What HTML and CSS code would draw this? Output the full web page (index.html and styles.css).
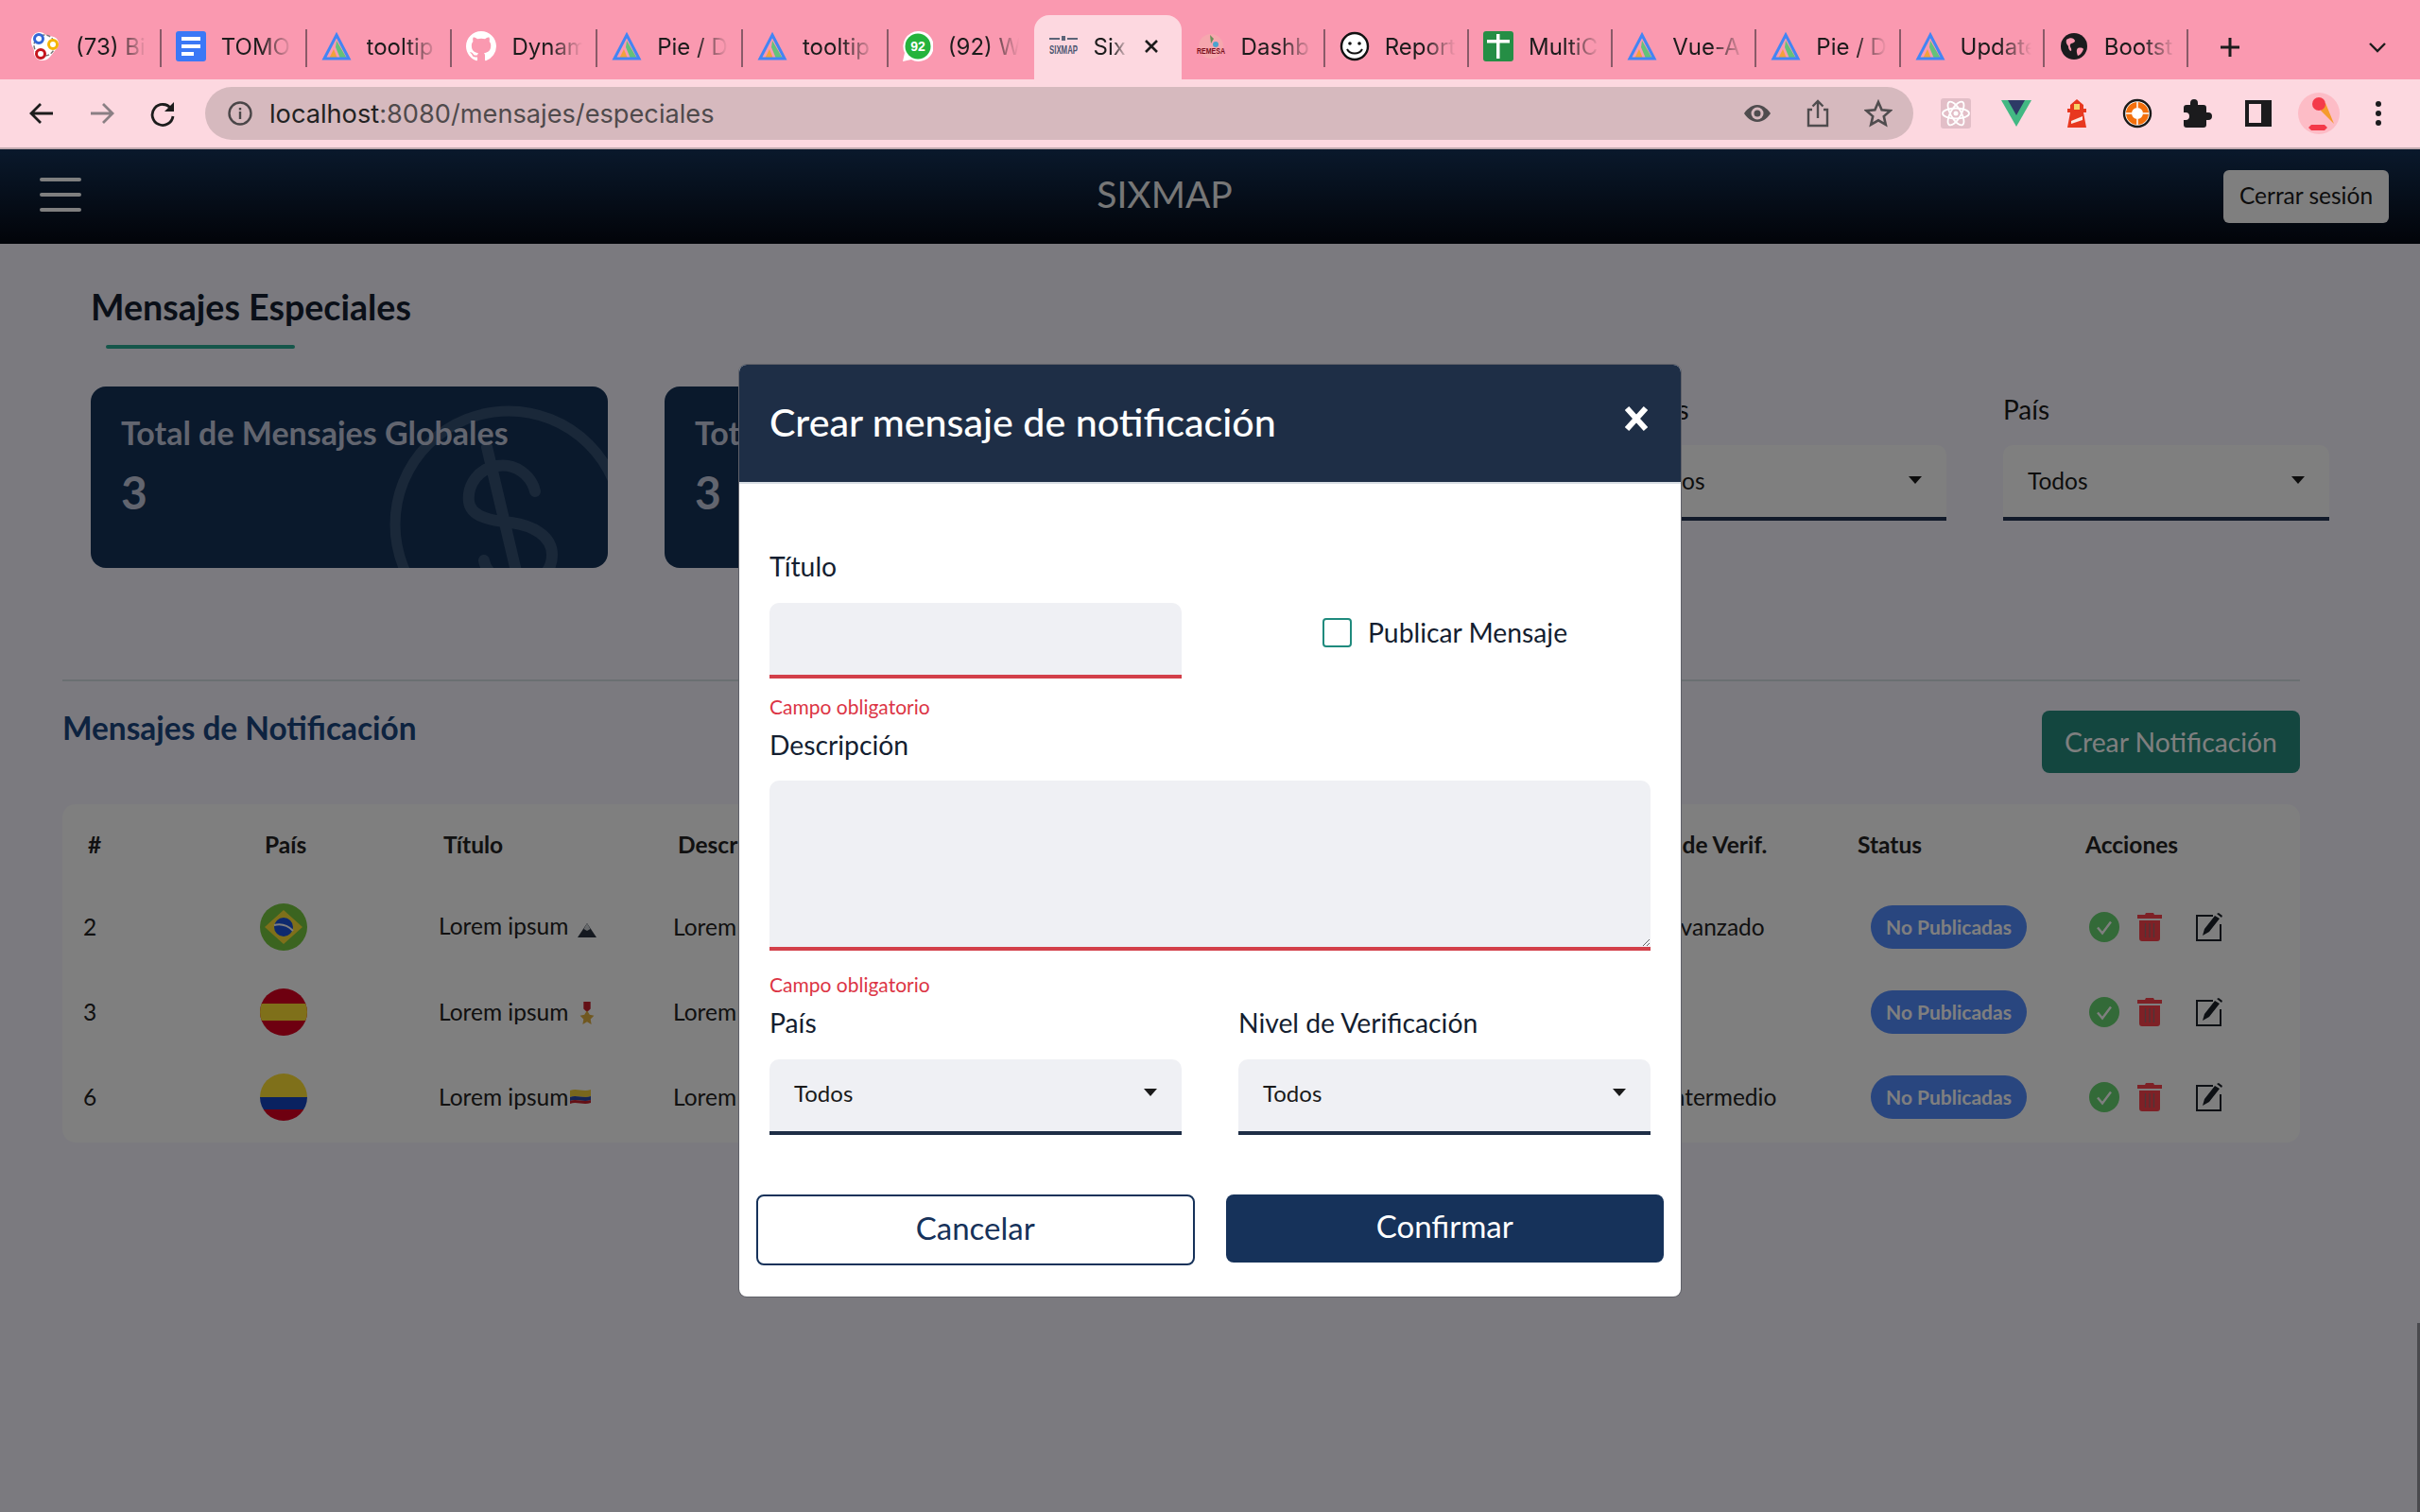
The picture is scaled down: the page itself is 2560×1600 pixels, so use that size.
FILE: index.html
```html
<!DOCTYPE html>
<html lang="es">
  <head>
    <meta charset="UTF-8">
    <meta name="viewport" content="width=device-width">
    <title>SIXMAP</title>
    <link rel="stylesheet" href="styles.css">
  </head>
  <body>
    <svg class="sprites" aria-hidden="true">
      <symbol id="apex" viewBox="0 0 32 32">
        <path d="M16 10l11 19h-7l-5-12z" fill="#63c27a"/>
        <path d="M13 19l4 10H8z" fill="#f2a23c"/>
        <path d="M16 4 29 29H3Z" fill="none" stroke="#4285f4" stroke-width="3"/>
      </symbol>
      <symbol id="check" viewBox="0 0 32 32">
        <circle cx="16" cy="16" r="16" fill="#66d470"/>
        <path d="M9 16.5l5 6 9-12" fill="none" stroke="#fff" stroke-width="2.4"/>
      </symbol>
      <symbol id="trash" viewBox="0 0 26 30">
        <path d="M9 0h8l1 2h8v4H0V2h8zM2 8h22v19a3 3 0 0 1-3 3H5a3 3 0 0 1-3-3z" fill="#fc424c"/>
        <path d="M8.500 11v15M13 11v15M17.500 11v15" stroke="#9c6a6e" stroke-width="1.300"/>
      </symbol>
      <symbol id="edit" viewBox="0 0 30 30">
        <path d="M19 3H2v26h25V12" fill="none" stroke="#1a2028" stroke-width="2"/>
        <path d="M8 24l2-7L21 3l5 3-11 14zM23 1l2-1 4 3-1 2z" fill="#1a2028"/>
      </symbol>
      <symbol id="caret" viewBox="0 0 14 8">
        <path d="M0 0h14L7 8z" fill="#1a1a1a"/>
      </symbol>
    </svg>

    <!-- Browser chrome -->
    <header class="chrome">
      <div class="tabstrip">
        <div class="tab">
          <svg class="favicon" viewBox="0 0 32 32"><path d="M10 1c4 0 6 3 9 4 5 0 11 2 11 8 0 4-3 6-5 9-3 4-6 9-12 9-6 0-10-5-9-10 0-3-3-5-3-10 0-6 4-10 9-10z" fill="#fff"/><circle cx="15" cy="15" r="11" fill="none" stroke="#777" stroke-width="1.500" stroke-dasharray="4 2"/><circle cx="9" cy="8" r="4.500" fill="#fff" stroke="#3367d6" stroke-width="3"/><circle cx="24" cy="14" r="4.500" fill="#fff" stroke="#f4b400" stroke-width="3"/><circle cx="11" cy="24" r="4.500" fill="#fff" stroke="#c5161d" stroke-width="3"/></svg>
          <span class="tab-title">(73) Bi</span>
        </div>
        <div class="tab">
          <svg class="favicon" viewBox="0 0 32 32"><rect width="32" height="32" rx="3" fill="#3b78f6"/><path d="M6 6h20v4H6zM6 14h20v4H6zM6 22h13v4H6z" fill="#fff"/></svg>
          <span class="tab-title">TOMO</span>
        </div>
        <div class="tab">
          <svg class="favicon"><use href="#apex"/></svg>
          <span class="tab-title">tooltip</span>
        </div>
        <div class="tab">
          <svg class="favicon" viewBox="0 0 16 16"><path fill="#fff" d="M8 0C3.580 0 0 3.580 0 8c0 3.540 2.290 6.530 5.470 7.590.4.070.55-.17.550-.38 0-.19-.01-.82-.01-1.490-2.010.37-2.530-.49-2.690-.94-.09-.23-.48-.94-.82-1.130-.28-.15-.68-.52-.01-.53.630-.01 1.080.58 1.230.82.720 1.210 1.870.87 2.330.66.070-.52.280-.87.510-1.070-1.780-.2-3.640-.89-3.640-3.950 0-.87.310-1.590.820-2.150-.08-.2-.36-1.020.08-2.120 0 0 .67-.21 2.200.820.640-.18 1.320-.27 2-.27s1.360.09 2 .27c1.530-1.040 2.200-.82 2.200-.82.440 1.100.16 1.920.08 2.120.51.560.820 1.270.820 2.150 0 3.070-1.870 3.750-3.650 3.950.29.250.54.730.54 1.480 0 1.070-.01 1.930-.01 2.200 0 .210.150.460.550.380A8.010 8.010 0 0 0 16 8c0-4.420-3.580-8-8-8z"/></svg>
          <span class="tab-title">Dynam</span>
        </div>
        <div class="tab">
          <svg class="favicon"><use href="#apex"/></svg>
          <span class="tab-title">Pie / D</span>
        </div>
        <div class="tab">
          <svg class="favicon"><use href="#apex"/></svg>
          <span class="tab-title">tooltip</span>
        </div>
        <div class="tab tab-before-active">
          <svg class="favicon" viewBox="0 0 32 32"><path d="M16 0a16 16 0 1 1-7 30l-9 2 2-9A16 16 0 0 1 16 0z" fill="#fff"/><circle cx="16" cy="16" r="13.500" fill="#25b33c"/><text class="wa-count" x="16" y="21">92</text></svg>
          <span class="tab-title">(92) W</span>
        </div>
        <div class="tab tab-active">
          <svg class="favicon" viewBox="0 0 32 32"><path d="M1 8h11M20 8h11" stroke="#5c6478" stroke-width="2"/><rect x="14" y="5" width="4" height="5" fill="#5c6478"/><text class="mini-logo" x="16" y="24" textLength="30" lengthAdjust="spacingAndGlyphs">SIXMAP</text></svg>
          <span class="tab-title tab-title-short">Six</span>
          <svg class="tab-close" viewBox="0 0 16 16"><path d="M2 2l12 12M14 2 2 14" stroke="#1c1c1c" stroke-width="2.600"/></svg>
        </div>
        <div class="tab">
          <svg class="favicon" viewBox="0 0 32 32"><circle cx="16" cy="16" r="13" fill="#f6a7ae"/><path d="M15 4l4 4-3 5z" fill="#6b8f5a"/><circle cx="21" cy="14" r="3" fill="#4aa3cf"/><text class="mini-logo mini-logo-red" x="16" y="24" textLength="30" lengthAdjust="spacingAndGlyphs">REMESA</text></svg>
          <span class="tab-title">Dashb</span>
        </div>
        <div class="tab">
          <svg class="favicon" viewBox="0 0 32 32"><circle cx="16" cy="16" r="14" fill="#fff" stroke="#111" stroke-width="2.400"/><circle cx="11" cy="13" r="1.800" fill="#111"/><circle cx="21" cy="13" r="1.800" fill="#111"/><path d="M8 19c3 6 13 6 16 0" fill="none" stroke="#111" stroke-width="2"/></svg>
          <span class="tab-title">Report</span>
        </div>
        <div class="tab">
          <svg class="favicon" viewBox="0 0 32 32"><rect width="32" height="32" rx="3" fill="#258e45"/><path d="M4 9h24v3.500H4zM14 3h3.500v26H14z" fill="#fff"/></svg>
          <span class="tab-title">MultiC</span>
        </div>
        <div class="tab">
          <svg class="favicon"><use href="#apex"/></svg>
          <span class="tab-title">Vue-A</span>
        </div>
        <div class="tab">
          <svg class="favicon"><use href="#apex"/></svg>
          <span class="tab-title">Pie / D</span>
        </div>
        <div class="tab">
          <svg class="favicon"><use href="#apex"/></svg>
          <span class="tab-title">Update</span>
        </div>
        <div class="tab">
          <svg class="favicon" viewBox="0 0 32 32"><circle cx="16" cy="16" r="14" fill="#1b1b1d"/><path d="M8 9c4-3 8-2 9 1 0 3-4 2-5 4-1 3 2 4 1 7-2 0-3-3-3-5-1-2-3-3-2-7zM20 18c3-1 6 0 6 1-1 3-3 6-6 7-1-3-2-6 0-8z" fill="#fa99b0"/></svg>
          <span class="tab-title">Bootst</span>
        </div>
        <svg class="new-tab" viewBox="0 0 24 24"><path d="M12 2v20M2 12h20" stroke="#1c1c1c" stroke-width="3"/></svg>
        <svg class="tab-menu" viewBox="0 0 20 12"><path d="M2 2l8 8 8-8" fill="none" stroke="#1c1c1c" stroke-width="2.400"/></svg>
      </div>

      <div class="toolbar">
        <svg class="nav-icon" viewBox="0 0 28 28"><path d="M26 14H4M13 4 3 14l10 10" fill="none" stroke="#1c1c1c" stroke-width="2.800"/></svg>
        <svg class="nav-icon" viewBox="0 0 28 28"><path d="M2 14h22M15 4l10 10-10 10" fill="none" stroke="#8a7f84" stroke-width="2.800"/></svg>
        <svg class="nav-icon" viewBox="0 0 28 28"><path d="M23 9a11 11 0 1 0 2 8" fill="none" stroke="#1c1c1c" stroke-width="2.800"/><path d="M26 2v10H16z" fill="#1c1c1c"/></svg>
        <div class="urlbar">
          <svg class="url-info" viewBox="0 0 26 26"><circle cx="13" cy="13" r="11.500" fill="none" stroke="#4a4648" stroke-width="2.400"/><path d="M13 11v8M13 7v2.500" stroke="#4a4648" stroke-width="2.400"/></svg>
          <span class="url-text"><b>localhost</b>:8080/mensajes/especiales</span>
          <svg class="url-action" viewBox="0 0 30 30"><path d="M15 6C8 6 3 12 1 15c2 3 7 9 14 9s12-6 14-9c-2-3-7-9-14-9z" fill="#4f4c4e"/><circle cx="15" cy="15" r="6.500" fill="#d6b9be"/><circle cx="15" cy="15" r="3.500" fill="#4f4c4e"/></svg>
          <svg class="url-action" viewBox="0 0 30 30"><path d="M9 11H5v17h20V11h-4M15 20V2M9.500 7.500 15 2l5.500 5.500" fill="none" stroke="#4f4c4e" stroke-width="2.400"/></svg>
          <svg class="url-action" viewBox="0 0 30 30"><path d="M15 3l3.600 8.300 9 .8-6.800 6 2 8.800L15 22.300 7.200 26.900l2-8.800-6.800-6 9-.8z" fill="none" stroke="#4f4c4e" stroke-width="2.600"/></svg>
        </div>
        <div class="extensions">
          <svg class="ext" viewBox="0 0 32 32"><rect width="32" height="32" rx="3" fill="#e2bec7"/><g fill="none" stroke="#fff" stroke-width="1.800"><ellipse cx="16" cy="16" rx="14" ry="5.500"/><ellipse cx="16" cy="16" rx="14" ry="5.500" transform="rotate(60 16 16)"/><ellipse cx="16" cy="16" rx="14" ry="5.500" transform="rotate(120 16 16)"/></g><circle cx="16" cy="16" r="2.500" fill="#fff"/></svg>
          <svg class="ext" viewBox="0 0 32 32"><path d="M0 2h32L16 30z" fill="#42b883"/><path d="M7 2h18L16 18z" fill="#2d3a66"/></svg>
          <svg class="ext" viewBox="0 0 32 32"><path d="M16 1l7 6v4h3v4h-3l3 16H6l3-16H6v-4h3V7z" fill="#e8381f"/><rect x="13" y="6" width="6" height="6" fill="#f6d365"/><path d="M10 24l12-5v4l-12 4z" fill="#fbe9e4"/></svg>
          <svg class="ext" viewBox="0 0 32 32"><circle cx="16" cy="16" r="14" fill="#fff" stroke="#1a1a1a" stroke-width="2.400"/><circle cx="16" cy="16" r="9" fill="none" stroke="#f36f0c" stroke-width="6"/><path d="M16 4v6M16 22v6M4 16h6M22 16h6" stroke="#fff" stroke-width="1.500"/></svg>
          <svg class="ext" viewBox="0 0 32 32"><path d="M12 1a4 4 0 0 1 4 4v2h6a3 3 0 0 1 3 3v5h2a4 4 0 0 1 0 8h-2v5a3 3 0 0 1-3 3H4a3 3 0 0 1-3-3v-5h2a4 4 0 0 0 0-8H1v-5a3 3 0 0 1 3-3h4V5a4 4 0 0 1 4-4z" fill="#1b1b1d"/></svg>
          <svg class="ext" viewBox="0 0 32 32"><path fill-rule="evenodd" d="M2 2h28v28H2zM6 6v20h13V6z" fill="#1b1b1d"/></svg>
          <div class="avatar">
            <svg class="avatar-art" viewBox="0 0 44 44"><path d="M24 19 38 33 29 11z" fill="#f59b2c"/><circle cx="22" cy="12" r="7" fill="#f43a4a"/><path d="M14 34h14l3 3-3 3H14l-3-3z" fill="#f43a4a"/></svg>
          </div>
          <svg class="ext ext-menu" viewBox="0 0 8 32"><circle cx="4" cy="6" r="3" fill="#1b1b1d"/><circle cx="4" cy="16" r="3" fill="#1b1b1d"/><circle cx="4" cy="26" r="3" fill="#1b1b1d"/></svg>
        </div>
      </div>
    </header>

    <!-- App -->
    <nav class="navbar">
      <div class="burger"><span></span><span></span><span></span></div>
      <div class="brand">SIXMAP</div>
      <button type="button" class="logout">Cerrar sesión</button>
    </nav>

    <main class="page">
      <div class="page-heading">
        <h1>Mensajes Especiales</h1>
        <div class="heading-rule"></div>
      </div>

      <section class="summary">
        <article class="stat-card">
          <svg class="stat-coin" viewBox="96 409 547 192"><circle cx="538" cy="555" r="120" fill="none" stroke="#345072" stroke-width="11"/><path d="M566 520c-4-18-22-30-40-27-20 3-32 20-30 38 2 16 24 20 45 22 22 3 43 14 43 34 0 22-18 30-36 30-18 0-34-10-36-24M515 473l33 140" fill="none" stroke="#345072" stroke-width="12" stroke-linecap="round"/></svg>
          <h2>Total de Mensajes Globales</h2>
          <p>3</p>
        </article>
        <article class="stat-card">
          <h2>Total de Mensajes Locales</h2>
          <p>3</p>
        </article>
        <div class="filters">
          <div class="filter">
            <label>Pagos</label>
            <div class="select-box"><span>Todos</span><svg class="caret"><use href="#caret"/></svg></div>
          </div>
          <div class="filter">
            <label>País</label>
            <div class="select-box"><span>Todos</span><svg class="caret"><use href="#caret"/></svg></div>
          </div>
        </div>
      </section>

      <hr class="divider">

      <section class="messages">
        <div class="messages-head">
          <h2>Mensajes de Notificación</h2>
          <button type="button" class="btn-create">Crear Notificación</button>
        </div>
        <div class="table-card">
          <table>
            <colgroup>
              <col class="c-id"><col class="c-pais"><col class="c-titulo"><col class="c-desc"><col class="c-nivel"><col class="c-status"><col class="c-actions">
            </colgroup>
            <thead>
              <tr><th>#</th><th>País</th><th>Título</th><th>Descripción</th><th class="th-nivel">Nivel de Verif.</th><th>Status</th><th>Acciones</th></tr>
            </thead>
            <tbody>
              <tr>
                <td>2</td>
                <td class="cell-mid"><svg class="flag" viewBox="0 0 50 50"><circle cx="25" cy="25" r="25" fill="#76c840"/><path d="M25 7 45 25 25 43 5 25z" fill="#ffe034"/><circle cx="25" cy="25" r="10" fill="#1c54dc"/><path d="M15 23c8-2 15 1 20 6" fill="none" stroke="#fff" stroke-width="2"/></svg></td>
                <td>Lorem ipsum <svg class="emoji emoji-peak" viewBox="0 0 22 22"><path d="M11 4l10 15H1z" fill="#2a3340"/><path d="M11 4l3.500 6-3.500 2-3.500-2z" fill="#d0d4d8"/></svg></td>
                <td>Lorem ipsum dolor sit amet</td>
                <td class="cell-nivel">Avanzado</td>
                <td class="cell-mid"><span class="pill">No Publicadas</span></td>
                <td class="cell-mid"><div class="actions"><svg class="act-check"><use href="#check"/></svg><svg class="act-trash"><use href="#trash"/></svg><svg class="act-edit"><use href="#edit"/></svg></div></td>
              </tr>
              <tr>
                <td>3</td>
                <td class="cell-mid"><svg class="flag" viewBox="0 0 50 50"><clipPath id="round-es"><circle cx="25" cy="25" r="25"/></clipPath><g clip-path="url(#round-es)"><rect width="50" height="50" fill="#dc0020"/><rect y="16" width="50" height="18" fill="#ffe034"/></g></svg></td>
                <td>Lorem ipsum <svg class="emoji" viewBox="0 0 22 26"><path d="M7 0h8v8l-4 4-4-4z" fill="#c8202c"/><path d="M11 10l3 5 5 1-4 4 1 6-5-3-5 3 1-6-4-4 5-1z" fill="#e0b040"/></svg></td>
                <td>Lorem ipsum dolor sit amet</td>
                <td class="cell-nivel"></td>
                <td class="cell-mid"><span class="pill">No Publicadas</span></td>
                <td class="cell-mid"><div class="actions"><svg class="act-check"><use href="#check"/></svg><svg class="act-trash"><use href="#trash"/></svg><svg class="act-edit"><use href="#edit"/></svg></div></td>
              </tr>
              <tr>
                <td>6</td>
                <td class="cell-mid"><svg class="flag" viewBox="0 0 50 50"><clipPath id="round-co"><circle cx="25" cy="25" r="25"/></clipPath><g clip-path="url(#round-co)"><rect width="50" height="25" fill="#ffe034"/><rect y="25" width="50" height="13" fill="#1444c0"/><rect y="38" width="50" height="12" fill="#dc0020"/></g></svg></td>
                <td>Lorem ipsum<svg class="emoji emoji-flag" viewBox="0 0 22 16"><path d="M0 2c7-3 14 2 22-1v7c-8 3-15-2-22 1z" fill="#f2cf3a"/><path d="M0 9c7-3 14 2 22-1v4c-8 3-15-2-22 1z" fill="#2a48a8"/><path d="M0 13c7-3 14 2 22-1v3c-8 3-15-2-22 1z" fill="#c8202c"/></svg></td>
                <td>Lorem ipsum dolor sit amet</td>
                <td class="cell-nivel">Intermedio</td>
                <td class="cell-mid"><span class="pill">No Publicadas</span></td>
                <td class="cell-mid"><div class="actions"><svg class="act-check"><use href="#check"/></svg><svg class="act-trash"><use href="#trash"/></svg><svg class="act-edit"><use href="#edit"/></svg></div></td>
              </tr>
            </tbody>
          </table>
        </div>
      </section>
    </main>

    <!-- Modal -->
    <div class="backdrop"></div>
    <div class="scroll-thumb"></div>
    <div class="modal">
      <div class="modal-header">
        <h3>Crear mensaje de notificación</h3>
        <svg class="modal-close" viewBox="0 0 26 28"><path d="M3 3l20 22M23 3 3 25" stroke="#fff" stroke-width="6"/></svg>
      </div>
      <form class="modal-body">
        <div class="form-row form-row-top">
          <div class="field">
            <label>Título</label>
            <input type="text" class="control control-error">
            <small>Campo obligatorio</small>
          </div>
          <label class="publish"><span class="checkbox"></span>Publicar Mensaje</label>
        </div>
        <div class="field field-wide">
          <label>Descripción</label>
          <textarea class="control control-area control-error"></textarea>
          <small>Campo obligatorio</small>
        </div>
        <div class="form-row form-row-selects">
          <div class="field">
            <label>País</label>
            <div class="control control-select"><span>Todos</span><svg class="caret"><use href="#caret"/></svg></div>
          </div>
          <div class="field">
            <label>Nivel de Verificación</label>
            <div class="control control-select"><span>Todos</span><svg class="caret"><use href="#caret"/></svg></div>
          </div>
        </div>
      </form>
      <div class="modal-footer">
        <button type="button" class="btn-cancel">Cancelar</button>
        <button type="button" class="btn-confirm">Confirmar</button>
      </div>
    </div>
  </body>
</html>
```

FILE: styles.css
```css
html, body {
  margin: 0;
  height: 1600px;
  overflow: hidden;
}
body {
  position: relative;
  background: #f6f4fe;
  font-family: Lato, "Open Sans", sans-serif;
  color: #1a1a1a;
}
.sprites {
  display: none;
}
h1, h2, h3, p {
  margin: 0;
}
button {
  font-family: inherit;
  cursor: pointer;
}

/* Browser chrome */
.chrome {
  font-family: Inter, "Liberation Sans", sans-serif;
}
.tabstrip {
  display: flex;
  align-items: flex-end;
  height: 84px;
  padding-left: 17px;
  background: #fa99b0;
}
.tab {
  position: relative;
  flex: 0 0 153.8px;
  box-sizing: border-box;
  display: flex;
  align-items: center;
  gap: 16px;
  height: 68px;
  padding: 0 0 2px 15px;
  color: #1c1c1c;
}
.tab::after {
  content: "";
  position: absolute;
  right: 0;
  top: 15px;
  width: 2px;
  height: 40px;
  background: #8a5a68;
}
.tab-before-active::after,
.tab-active::after {
  display: none;
}
.tab-active {
  flex-basis: 156px;
  background: #fdd8e0;
  border-radius: 16px 16px 0 0;
}
.tab-active ~ .tab {
  flex-basis: 152.2px;
}
.favicon {
  flex: none;
  width: 32px;
  height: 32px;
}
.tab-title {
  flex: 0 0 75px;
  overflow: hidden;
  white-space: nowrap;
  font-size: 24px;
  -webkit-mask-image: linear-gradient(to right, #000 55%, transparent 100%);
  mask-image: linear-gradient(to right, #000 55%, transparent 100%);
}
.tab-title-short {
  flex-basis: 36px;
}
.tab-close {
  flex: none;
  width: 16px;
  height: 16px;
  margin-left: 1px;
}
.wa-count {
  font: 700 14px "Liberation Sans", sans-serif;
  fill: #fff;
  text-anchor: middle;
}
.mini-logo {
  font: 700 12px "Liberation Sans", sans-serif;
  fill: #4b5670;
  text-anchor: middle;
}
.mini-logo-red {
  font-size: 9px;
  fill: #7a1020;
}
.new-tab {
  flex: none;
  align-self: center;
  width: 24px;
  height: 24px;
  margin: 16px 0 0 32px;
}
.tab-menu {
  flex: none;
  align-self: center;
  width: 20px;
  height: 12px;
  margin: 16px 0 0 134px;
}
.toolbar {
  display: flex;
  align-items: center;
  height: 72px;
  padding-left: 30px;
  background: #fdd8e0;
  border-bottom: 2px solid #c0a8ae;
}
.nav-icon {
  flex: none;
  width: 28px;
  height: 28px;
  margin-right: 36px;
}
.urlbar {
  flex: none;
  display: flex;
  align-items: center;
  box-sizing: border-box;
  width: 1807px;
  height: 56px;
  margin-left: -5px;
  padding: 0 22px 0 24px;
  background: #d6b9be;
  border-radius: 28px;
}
.url-info {
  flex: none;
  width: 26px;
  height: 26px;
}
.url-text {
  flex: 1;
  margin-left: 18px;
  font-size: 27.2px;
  color: #4f4a4c;
}
.url-text b {
  font-weight: 400;
  color: #222;
}
.url-action {
  flex: none;
  width: 30px;
  height: 30px;
  margin-left: 34px;
}
.extensions {
  flex: none;
  display: flex;
  align-items: center;
  gap: 32px;
  margin-left: 29px;
}
.ext {
  flex: none;
  width: 32px;
  height: 32px;
}
.ext-menu {
  width: 8px;
  margin: 0 12px 0 11px;
}
.avatar {
  flex: none;
  width: 44px;
  height: 44px;
  margin: 0 -6px;
  border-radius: 50%;
  background: #fdbcc6;
}
.avatar-art {
  display: block;
  width: 44px;
  height: 44px;
}

/* Navbar */
.navbar {
  display: flex;
  align-items: center;
  justify-content: space-between;
  box-sizing: border-box;
  height: 100px;
  padding: 0 33px 0 42px;
  background: linear-gradient(#143258, #040812);
}
.burger {
  display: flex;
  flex-direction: column;
  gap: 12px;
  width: 44px;
  margin-bottom: 4px;
}
.burger span {
  height: 4px;
  border-radius: 2px;
  background: #fff;
}
.brand {
  margin: 0 0 6px 26px;
  font-size: 39px;
  font-weight: 400;
  color: #eee;
}
.logout {
  width: 175px;
  height: 56px;
  padding: 0 0 4px;
  border: 0;
  border-radius: 6px;
  background: #fefefe;
  color: #1a1a1a;
  font-size: 24.5px;
}

/* Page */
.page {
  padding: 0 127px 0 66px;
}
.page-heading {
  padding: 44px 0 0 30px;
}
.page-heading h1 {
  font-size: 37.6px;
  font-weight: 700;
  line-height: 46px;
  color: #141e30;
}
.heading-rule {
  width: 200px;
  height: 4px;
  margin: 17px 0 0 16px;
  border-radius: 2px;
  background: #2aac94;
}
.summary {
  display: flex;
  align-items: flex-start;
  gap: 60px;
  margin: 40px -31px 0 30px;
}
.stat-card {
  position: relative;
  flex: none;
  box-sizing: border-box;
  width: 547px;
  height: 192px;
  padding: 27px 32px;
  overflow: hidden;
  border-radius: 16px;
  background: #143258;
  color: #c4cade;
}
.stat-coin {
  position: absolute;
  left: 0;
  top: 0;
  width: 547px;
  height: 192px;
}
.stat-card h2 {
  position: relative;
  font-size: 34px;
  font-weight: 700;
  line-height: 44px;
  white-space: nowrap;
}
.stat-card p {
  position: relative;
  margin-top: 15px;
  font-size: 48px;
  font-weight: 700;
  line-height: 52px;
}
.filters {
  display: flex;
  gap: 60px;
  margin-left: auto;
  padding-top: 8px;
}
.filter {
  width: 345px;
}
.filter label {
  display: block;
  font-size: 28px;
  line-height: 32px;
  margin-bottom: 22px;
}
.select-box {
  display: flex;
  align-items: center;
  justify-content: space-between;
  box-sizing: border-box;
  height: 80px;
  padding: 0 26px 2px;
  background: #fefefe;
  border-bottom: 4px solid #243454;
  border-radius: 10px 10px 0 0;
  font-size: 24.5px;
}
.caret {
  flex: none;
  width: 14px;
  height: 8px;
}
.divider {
  height: 2px;
  margin: 118px 0 0;
  border: 0;
  background: #d4dee4;
}
.messages-head {
  display: flex;
  justify-content: space-between;
  align-items: flex-start;
  margin-top: 31px;
}
.messages-head h2 {
  margin-top: -2px;
  font-size: 33.4px;
  font-weight: 700;
  line-height: 40px;
  color: #1a4680;
}
.btn-create {
  width: 273px;
  height: 66px;
  border: 0;
  border-radius: 8px;
  background: #268c7e;
  color: #fff;
  font-size: 28.3px;
}
.table-card {
  margin-top: 33px;
  height: 358px;
  border-radius: 14px;
  background: #fefefe;
}
table {
  width: 100%;
  table-layout: fixed;
  border-collapse: collapse;
}
.c-id { width: 187px; }
.c-pais { width: 189px; }
.c-titulo { width: 248px; }
.c-desc { width: 980px; }
.c-nivel { width: 268px; }
.c-status { width: 241px; }
.c-actions { width: 254px; }
th {
  height: 85px;
  padding: 0 0 0 27px;
  box-sizing: border-box;
  text-align: left;
  font-size: 24.5px;
  font-weight: 700;
  color: #222;
  white-space: nowrap;
}
.th-nivel {
  padding-left: 47px;
}
td {
  height: 90px;
  padding: 0 0 2px 22px;
  box-sizing: border-box;
  font-size: 24.5px;
  color: #222;
  white-space: nowrap;
  overflow: hidden;
}
.cell-nivel {
  padding-left: 92px;
}
.cell-mid {
  padding-bottom: 0;
}
.flag {
  display: block;
  width: 50px;
  height: 50px;
}
.emoji {
  width: 22px;
  height: 24px;
  margin-left: 2px;
  vertical-align: -4px;
}
.emoji-peak {
  vertical-align: -7px;
}
.emoji-flag {
  height: 16px;
  margin-left: 2px;
  vertical-align: 2px;
}
.pill {
  display: inline-block;
  box-sizing: border-box;
  width: 165px;
  height: 46px;
  margin-left: 19px;
  border-radius: 23px;
  background: #528cff;
  color: #fff;
  font-size: 21px;
  font-weight: 700;
  line-height: 46px;
  text-align: center;
}
.actions {
  display: flex;
  align-items: center;
  margin-left: 9px;
}
.act-check {
  width: 32px;
  height: 32px;
}
.act-trash {
  width: 26px;
  height: 30px;
  margin-left: 19px;
}
.act-edit {
  width: 30px;
  height: 30px;
  margin-left: 35px;
}

/* Modal */
.backdrop {
  position: absolute;
  left: 0;
  right: 0;
  top: 158px;
  bottom: 0;
  background: rgba(0, 0, 0, .5);
}
.scroll-thumb {
  position: absolute;
  right: 0;
  top: 1400px;
  width: 3px;
  height: 200px;
  background: #4a4a4e;
}
.modal {
  position: absolute;
  left: 782px;
  top: 386px;
  box-sizing: border-box;
  width: 996px;
  height: 986px;
  background: #fff;
  border-radius: 8px;
  box-shadow: 0 0 0 1px #5f6068;
  overflow: hidden;
}
.modal-header {
  display: flex;
  align-items: center;
  justify-content: space-between;
  height: 124px;
  padding: 0 34px 2px 32px;
  box-sizing: border-box;
  background: #1e2e46;
  border-bottom: 0;
  box-shadow: 0 2px 0 #d8dee4;
  color: #fff;
}
.modal-header h3 {
  margin-bottom: 3px;
  font-size: 41.2px;
  font-weight: 500;
}
.modal-close {
  width: 26px;
  height: 28px;
  margin-bottom: 8px;
}
.modal-body {
  padding: 72px 32px 0;
  color: #141e30;
}
.form-row {
  display: flex;
  gap: 60px;
}
.form-row-top {
  align-items: flex-start;
}
.form-row-selects {
  margin-top: 12px;
}
.field {
  flex: 0 0 436px;
}
.field label {
  display: block;
  font-size: 28.3px;
  line-height: 34px;
  margin-bottom: 22px;
}
.field small {
  display: block;
  margin-top: 19px;
  font-size: 21px;
  line-height: 22px;
  color: #dc3545;
}
.field-wide {
  margin-top: 12px;
}
.field-wide label {
  margin-bottom: 21px;
}
.field-wide small {
  margin-top: 25px;
}
.control {
  display: block;
  box-sizing: border-box;
  width: 100%;
  height: 80px;
  margin: 0;
  padding: 0 26px;
  background: #eff0f4;
  border: 0;
  border-bottom: 4px solid #1e2e46;
  border-radius: 10px 10px 0 0;
  outline: 0;
}
.control-error {
  border-bottom-color: #d33f49;
}
.control-area {
  height: 180px;
  resize: both;
}
.control-select {
  display: flex;
  align-items: center;
  justify-content: space-between;
  padding-bottom: 6px;
  font-size: 24px;
  color: #1a1a1a;
}
.publish {
  display: flex;
  align-items: center;
  gap: 17px;
  margin: 70px 0 0 89px;
  font-size: 28.3px;
  line-height: 34px;
}
.checkbox {
  flex: none;
  width: 31px;
  height: 31px;
  box-sizing: border-box;
  border: 2px solid #1f8a7d;
  border-radius: 4px;
}
.modal-footer {
  display: flex;
  align-items: flex-start;
  gap: 33px;
  margin-top: 63px;
  padding: 0 18px;
}
.modal-footer button {
  width: 464px;
  padding: 0 0 6px;
  font-size: 33px;
}
.btn-cancel {
  height: 75px;
  border: 2px solid #16325a;
  border-radius: 8px;
  background: #fff;
  color: #16325a;
}
.btn-confirm {
  height: 72px;
  border: 0;
  border-radius: 8px;
  background: #16325a;
  color: #fff;
}
```
